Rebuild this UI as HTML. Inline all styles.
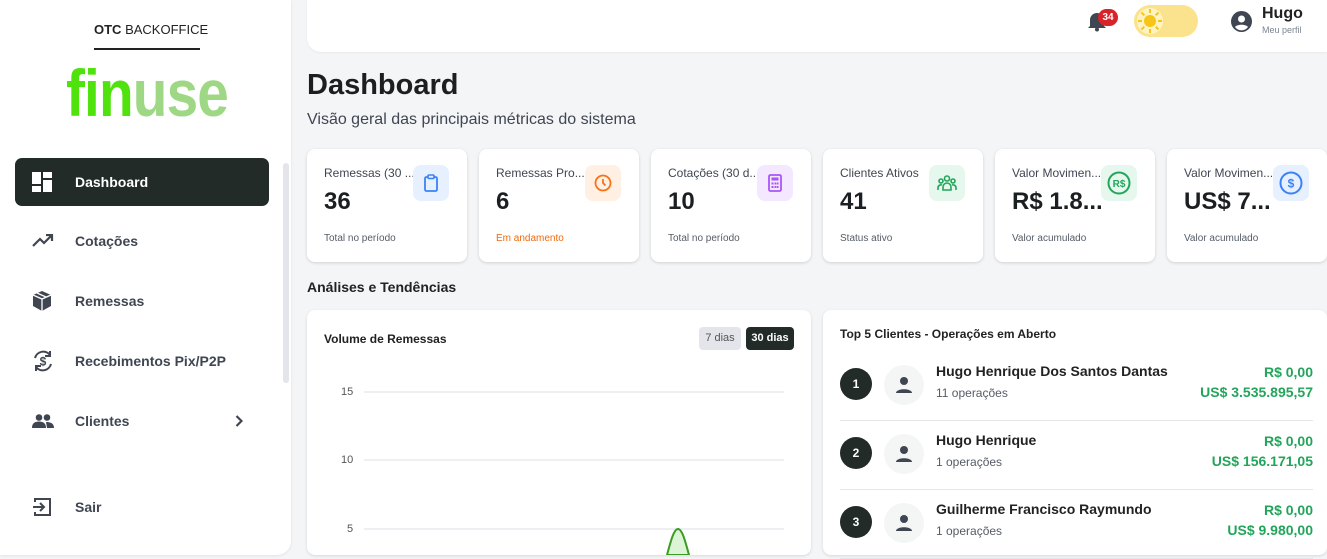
<!DOCTYPE html>
<html><head><meta charset="utf-8"><style>
*{box-sizing:border-box;margin:0;padding:0}
body{width:1327px;height:559px;overflow:hidden;background:#f4f5f7;font-family:"Liberation Sans",Arial,sans-serif;position:relative;color:#1f2326}
.abs{position:absolute}
.side{left:0;top:0;width:291px;height:555px;background:#fff;border-radius:0 0 14px 0;box-shadow:0 1px 3px rgba(0,0,0,.08)}
.nav{position:absolute;left:15px;width:254px;height:48px;display:flex;align-items:center;font-size:14px;color:#3f4652;font-weight:bold}
.nav svg{position:absolute;left:17px}
.nav span{position:absolute;left:60px}
.card{position:absolute;top:149px;width:160px;height:113px;background:#fff;border-radius:8px;box-shadow:0 1px 3px rgba(0,0,0,.15)}
.card .t{position:absolute;left:17px;top:17px;font-size:12px;color:#3f4652;white-space:nowrap}
.card .v{position:absolute;left:17px;top:39px;font-size:24px;font-weight:bold;color:#1c1f22}
.card .s{position:absolute;left:17px;top:84px;font-size:10px;color:#555c66}
.card .ic{position:absolute;left:106px;top:16px;width:36px;height:36px;border-radius:8px;display:flex;align-items:center;justify-content:center}
.panel{position:absolute;top:310px;height:245px;background:#fff;border-radius:8px;box-shadow:0 1px 3px rgba(0,0,0,.12)}
.row{position:absolute;left:17px;width:473px;height:69px;border-bottom:1px solid #e3e5e8}
.num{position:absolute;left:0;top:16px;width:32px;height:32px;border-radius:50%;background:#222b28;color:#fff;font-size:12px;font-weight:bold;display:flex;align-items:center;justify-content:center}
.av{position:absolute;left:44px;top:13px;width:40px;height:40px;border-radius:50%;background:#f4f6f6;display:flex;align-items:center;justify-content:center}
.nm{position:absolute;left:96px;top:11px;font-size:14px;font-weight:bold;color:#222}
.op{position:absolute;left:96px;top:34px;font-size:12px;color:#555c66}
.am{position:absolute;right:0;top:10px;text-align:right;font-size:14px;font-weight:bold;color:#22a55a;line-height:20px}
</style></head><body>
<div class="abs side">
  <div class="abs" style="left:94px;top:22px;font-size:13px;color:#222"><b>OTC</b> BACKOFFICE</div>
  <div class="abs" style="left:94px;top:48px;width:106px;height:2px;background:#222"></div>
  <div class="abs" style="left:66px;top:56px;font-size:66px;font-weight:bold;letter-spacing:-1px;line-height:74px;transform:scaleX(0.86);transform-origin:0 0"><span style="color:#4fe20d">fin</span><span style="color:#9ed885">use</span></div>
  <div class="nav" style="top:158px;background:#222b28;color:#fff;border-radius:7px">
    <svg width="20" height="20" viewBox="0 0 20 20"><rect x="0" y="0" width="9" height="12" fill="#fff"/><rect x="11" y="0" width="9" height="6" fill="#fff"/><rect x="11" y="8" width="9" height="12" fill="#fff"/><rect x="0" y="14" width="9" height="6" fill="#fff"/></svg><span>Dashboard</span></div>
  <div class="nav" style="top:217px"><svg width="22" height="14" viewBox="0 0 22 14"><path d="M1 12l7-7 4 4 8-8M14 1h6v6" fill="none" stroke="#3f4652" stroke-width="2.2"/></svg><span>Cotações</span></div>
  <div class="nav" style="top:277px"><svg width="20" height="20" viewBox="0 0 20 20"><path d="M10 0l9 4v11l-9 5-9-5V4z" fill="#3f4652"/><path d="M1 4l9 4 9-4M10 8v12M5 2l9 4" stroke="#fff" stroke-width="1.3" fill="none"/></svg><span>Remessas</span></div>
  <div class="nav" style="top:337px"><svg width="22" height="22" viewBox="0 0 22 22"><path d="M3 8a8.5 8.5 0 0 1 15-3M19 14a8.5 8.5 0 0 1-15 3" fill="none" stroke="#3f4652" stroke-width="2"/><path d="M18 1v5h-5M4 21v-5h5" fill="none" stroke="#3f4652" stroke-width="2"/><text x="11" y="15.5" font-size="12" text-anchor="middle" fill="#3f4652" font-family="Liberation Sans" font-weight="bold">$</text></svg><span>Recebimentos Pix/P2P</span></div>
  <div class="nav" style="top:397px"><svg width="22" height="14" viewBox="0 0 22 14"><circle cx="7" cy="3.5" r="3.3" fill="#3f4652"/><circle cx="15" cy="3.5" r="3.3" fill="#3f4652"/><path d="M0 14c0-5 3-6.5 7-6.5s7 1.5 7 6.5zM14 8c4 0 8 1 8 6h-7z" fill="#3f4652"/></svg><span>Clientes</span>
    <svg style="left:220px" width="8" height="12" viewBox="0 0 8 12"><path d="M1.5 1l5 5-5 5" fill="none" stroke="#3f4652" stroke-width="2.2"/></svg></div>
  <div class="nav" style="top:483px;font-weight:normal"><svg width="20" height="20" viewBox="0 0 20 20"><path d="M3 5V2h15v16H3v-3" fill="none" stroke="#3f4652" stroke-width="2"/><path d="M1 10h11M8 6l4 4-4 4" fill="none" stroke="#3f4652" stroke-width="2"/></svg><span style="font-weight:bold">Sair</span></div>
  <div class="abs" style="left:283px;top:163px;width:6px;height:220px;border-radius:3px;background:#e3e5ea"></div>
</div>
<div class="abs" style="left:307px;top:0;width:1020px;height:52px;background:#fff;border-radius:0 0 0 14px;box-shadow:0 1px 2px rgba(0,0,0,.05)"></div>
<svg class="abs" style="left:1087px;top:10px" width="20" height="22" viewBox="0 0 20 22"><path d="M3 16V10a7 7 0 0 1 14 0v6l2 2H1z" fill="#3f4652"/><circle cx="10" cy="19.5" r="2" fill="#3f4652"/></svg>
<div class="abs" style="left:1098px;top:9px;width:20px;height:17px;border-radius:9px;background:#d8232a;color:#fff;font-size:10px;font-weight:bold;text-align:center;line-height:17px">34</div>
<div class="abs" style="left:1134px;top:5px;width:64px;height:32px;border-radius:16px;background:#fbe38d"></div>
<svg class="abs" style="left:1136px;top:7px" width="28" height="28" viewBox="0 0 28 28"><circle cx="14" cy="14" r="13" fill="#fff3c2"/><circle cx="14" cy="14" r="6" fill="#f7c515"/><g stroke="#f7c515" stroke-width="2"><path d="M14 2v4M14 22v4M2 14h4M22 14h4M5.5 5.5l2.8 2.8M19.7 19.7l2.8 2.8M5.5 22.5l2.8-2.8M19.7 8.3l2.8-2.8"/></g></svg>
<svg class="abs" style="left:1231px;top:11px" width="21" height="21" viewBox="0 0 21 21"><circle cx="10.5" cy="10.5" r="10.5" fill="#3f4652"/><circle cx="10.5" cy="8" r="3.5" fill="#fff"/><path d="M4 16c2-3 11-3 13 0a8 8 0 0 1-13 0z" fill="#fff"/></svg>
<div class="abs" style="left:1262px;top:5px;font-size:16px;font-weight:bold;color:#222">Hugo</div>
<div class="abs" style="left:1262px;top:25px;font-size:9px;color:#7c8590">Meu perfil</div>

<div class="abs" style="left:307px;top:69px;font-size:29px;font-weight:bold;color:#1c1f22">Dashboard</div>
<div class="abs" style="left:307px;top:111px;font-size:16px;color:#3f4652">Visão geral das principais métricas do sistema</div>

<div class="card" style="left:307px"><div class="t">Remessas (30 ...</div><div class="v">36</div><div class="s">Total no período</div><div class="ic" style="background:#e6f0fe"><svg width="14" height="18" viewBox="0 0 14 18"><rect x="1" y="3" width="12" height="14" rx="1.5" fill="none" stroke="#3b82f6" stroke-width="1.8"/><rect x="4" y="1" width="6" height="3.5" rx="1" fill="#e6f0fe" stroke="#3b82f6" stroke-width="1.6"/></svg></div></div>
<div class="card" style="left:479px"><div class="t">Remessas Pro...</div><div class="v">6</div><div class="s" style="color:#f26a0c">Em andamento</div><div class="ic" style="background:#fff0e3"><svg width="18" height="18" viewBox="0 0 18 18"><circle cx="9" cy="9" r="7.5" fill="none" stroke="#f97316" stroke-width="1.8"/><path d="M9 5v4l2.5 2.5" fill="none" stroke="#f97316" stroke-width="1.8"/></svg></div></div>
<div class="card" style="left:651px"><div class="t">Cotações (30 d...</div><div class="v">10</div><div class="s">Total no período</div><div class="ic" style="background:#f3e8ff"><svg width="14" height="18" viewBox="0 0 14 18"><rect x="1" y="1" width="12" height="16" rx="1.5" fill="none" stroke="#a855f7" stroke-width="1.8"/><rect x="3.5" y="3.5" width="7" height="3" fill="#a855f7"/><g fill="#a855f7"><rect x="3.5" y="8.5" width="2" height="2"/><rect x="6.5" y="8.5" width="2" height="2"/><rect x="9" y="8.5" width="1.5" height="2"/><rect x="3.5" y="12" width="2" height="2"/><rect x="6.5" y="12" width="2" height="2"/><rect x="9" y="12" width="1.5" height="2"/></g></svg></div></div>
<div class="card" style="left:823px"><div class="t">Clientes Ativos</div><div class="v">41</div><div class="s">Status ativo</div><div class="ic" style="background:#e6f8ee"><svg width="20" height="16" viewBox="0 0 20 16"><g fill="none" stroke="#22a55a" stroke-width="1.6"><circle cx="10" cy="3.5" r="2.5"/><circle cx="4" cy="6" r="2"/><circle cx="16" cy="6" r="2"/><path d="M6 15v-3a4 4 0 0 1 8 0v3zM1 15v-2a3 3 0 0 1 4-3M19 15v-2a3 3 0 0 0-4-3"/></g></svg></div></div>
<div class="card" style="left:995px"><div class="t">Valor Movimen...</div><div class="v">R$ 1.8...</div><div class="s">Valor acumulado</div><div class="ic" style="background:#e6f8ee"><svg width="24" height="24" viewBox="0 0 24 24"><circle cx="12" cy="12" r="10.5" fill="none" stroke="#22a55a" stroke-width="2"/><text x="12" y="16" font-size="10" font-weight="bold" text-anchor="middle" fill="#22a55a" font-family="Liberation Sans">R$</text></svg></div></div>
<div class="card" style="left:1167px"><div class="t">Valor Movimen...</div><div class="v">US$ 7...</div><div class="s">Valor acumulado</div><div class="ic" style="background:#e6f0fe"><svg width="24" height="24" viewBox="0 0 24 24"><circle cx="12" cy="12" r="10.5" fill="none" stroke="#3b82f6" stroke-width="2"/><text x="12" y="16.5" font-size="12" font-weight="bold" text-anchor="middle" fill="#3b82f6" font-family="Liberation Sans">$</text></svg></div></div>

<div class="abs" style="left:307px;top:279px;font-size:14px;font-weight:bold;color:#222">Análises e Tendências</div>

<div class="panel" style="left:307px;width:504px">
  <div class="abs" style="left:17px;top:22px;font-size:12px;font-weight:bold;color:#222">Volume de Remessas</div>
  <div class="abs" style="left:392px;top:17px;width:42px;height:23px;border-radius:4px;background:#e3e5ea;font-size:11px;color:#555;text-align:center;line-height:23px">7 dias</div>
  <div class="abs" style="left:439px;top:17px;width:48px;height:23px;border-radius:4px;background:#222b28;font-size:11px;color:#fff;font-weight:bold;text-align:center;line-height:23px">30 dias</div>
  <div class="abs" style="left:34px;top:76px;font-size:11px;color:#555">15</div>
  <div class="abs" style="left:34px;top:144px;font-size:11px;color:#555">10</div>
  <div class="abs" style="left:40px;top:213px;font-size:11px;color:#555">5</div>
  <svg class="abs" style="left:0;top:0" width="504" height="245"><g stroke="#e3e5ea" stroke-width="1.2"><path d="M57 82H477M57 150H477M57 219H477"/></g><path d="M360 245C364 230 367 219 371 219S378 230 382 245z" fill="#dcf3d6" stroke="#3a9d23" stroke-width="2"/></svg>
</div>

<div class="panel" style="left:823px;width:504px">
  <div class="abs" style="left:17px;top:17px;font-size:12px;font-weight:bold;color:#222">Top 5 Clientes - Operações em Aberto</div>
  <div class="row" style="top:42px"><div class="num">1</div><div class="av"><svg width="18" height="18" viewBox="0 0 18 18"><circle cx="9" cy="5" r="4" fill="#3f4652"/><path d="M1 17c0-5 16-5 16 0z" fill="#3f4652"/></svg></div><div class="nm">Hugo Henrique Dos Santos Dantas</div><div class="op">11 operações</div><div class="am">R$ 0,00<br>US$ 3.535.895,57</div></div>
  <div class="row" style="top:111px"><div class="num">2</div><div class="av"><svg width="18" height="18" viewBox="0 0 18 18"><circle cx="9" cy="5" r="4" fill="#3f4652"/><path d="M1 17c0-5 16-5 16 0z" fill="#3f4652"/></svg></div><div class="nm">Hugo Henrique</div><div class="op">1 operações</div><div class="am">R$ 0,00<br>US$ 156.171,05</div></div>
  <div class="row" style="top:180px"><div class="num">3</div><div class="av"><svg width="18" height="18" viewBox="0 0 18 18"><circle cx="9" cy="5" r="4" fill="#3f4652"/><path d="M1 17c0-5 16-5 16 0z" fill="#3f4652"/></svg></div><div class="nm">Guilherme Francisco Raymundo</div><div class="op">1 operações</div><div class="am">R$ 0,00<br>US$ 9.980,00</div></div>
</div>
</body></html>
